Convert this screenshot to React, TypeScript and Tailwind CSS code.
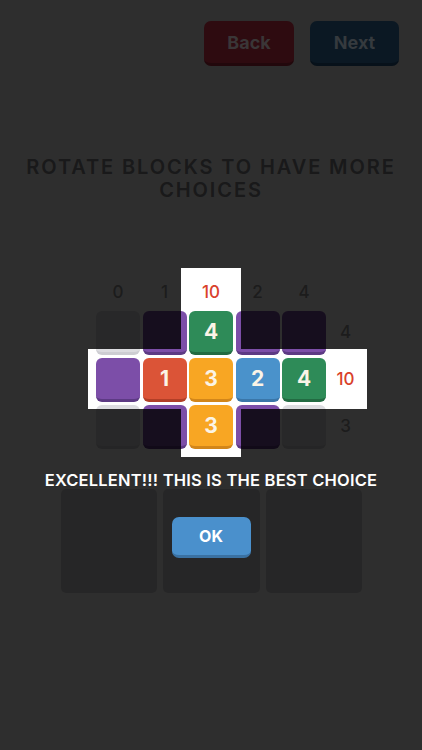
import type { ReactNode } from 'react';

type Tone = 'empty' | 'purple' | 'red' | 'orange' | 'blue' | 'green';

const toneClass: Record<Tone, string> = {
  empty: 'bg-[#dcdce0] border-[#cdcdd2]',
  purple: 'bg-[#7c4ea8] border-[#5d3a84]',
  red: 'bg-[#db5437] border-[#b23f27]',
  orange: 'bg-[#f8a623] border-[#d2861a]',
  blue: 'bg-[#4a92cb] border-[#3a76a8]',
  green: 'bg-[#2e8b58] border-[#226b42]',
};

// board rows: [tone, number]
const board: [Tone, number | null][][] = [
  [['empty', null], ['purple', null], ['green', 4], ['purple', null], ['purple', null]],
  [['purple', null], ['red', 1], ['orange', 3], ['blue', 2], ['green', 4]],
  [['empty', null], ['purple', null], ['orange', 3], ['purple', null], ['empty', null]],
];

const colLabels = ['0', '1', '10', '2', '4'];
const rowLabels = ['4', '10', '3'];

function Block({ tone, value }: { tone: Tone; value: number | null }) {
  return (
    <div
      className={`w-[44px] h-[44px] rounded-[6px] border-b-[3px] flex items-center justify-center text-[21px] font-bold text-[#fbf4e6] ${toneClass[tone]}`}
    >
      {value}
    </div>
  );
}

function Label({ children, hot }: { children: ReactNode; hot?: boolean }) {
  return (
    <div
      className={`flex items-center justify-center text-[17px] font-medium ${hot ? 'text-[#d9412b]' : 'text-[#9a9a9c]'}`}
    >
      {children}
    </div>
  );
}

export default function App() {
  return (
    <div className="relative w-full h-[750px] overflow-hidden bg-white font-['Inter','Noto_Sans',sans-serif]">
      <div className="relative z-20 flex justify-end gap-4 pt-[21px] pr-[23px]">
        <button className="w-[90px] h-[45px] rounded-[7px] bg-[#2e0b10] border-b-[3px] border-[#22080c] text-[18px] font-bold text-[#3a3637]">
          Back
        </button>
        <button className="w-[89px] h-[45px] rounded-[7px] bg-[#0b1823] border-b-[3px] border-[#07111a] text-[18px] font-bold text-[#353a3e]">
          Next
        </button>
      </div>

      <h1 className="mt-[90px] px-4 text-center text-[20px] leading-[23px] font-semibold tracking-[1.9px] text-[#8b8b8e]">
        <span className="block">ROTATE BLOCKS TO HAVE MORE</span>
        <span className="block">CHOICES</span>
      </h1>

      {/* board */}
      <div className="mt-[76px] ml-[96px] grid grid-cols-[44px_44px_44px_44px_44px_34px] grid-rows-[30px_44px_44px_44px] gap-x-[2.5px] gap-y-[3px]">
        {colLabels.map((l) => (
          <Label key={`c${l}`} hot={l === '10'}>
            {l}
          </Label>
        ))}
        <div />
        {board.map((row, r) => (
          <>
            {row.map(([tone, value], c) => (
              <Block key={`${r}-${c}`} tone={tone} value={value} />
            ))}
            <Label key={`r${r}`} hot={r === 1}>
              {rowLabels[r]}
            </Label>
          </>
        ))}
      </div>

      {/* choice slots */}
      <div className="mt-[40px] flex justify-center gap-[6px] pl-[1px]">
        <div className="w-[96px] h-[104px] rounded-[5px] bg-[#d4d4d6]" />
        <div className="w-[97px] h-[104px] rounded-[5px] bg-[#d4d4d6]" />
        <div className="w-[96px] h-[104px] rounded-[5px] bg-[#d4d4d6]" />
      </div>

      {/* dim overlay with the highlighted cross cut out */}
      <div className="absolute inset-0 z-10 bg-black/[0.82] [clip-path:polygon(evenodd,0_0,422px_0,422px_750px,0_750px,0_0,181px_268px,241px_268px,241px_349px,367px_349px,367px_409px,241px_409px,241px_457px,181px_457px,181px_409px,88px_409px,88px_349px,181px_349px,181px_268px)]" />

      {/* hint popup */}
      <div className="absolute z-20 inset-x-0 top-[470px] flex flex-col items-center">
        <p className="text-[16.5px] leading-[20px] font-semibold tracking-[0.2px] text-white">
          EXCELLENT!!! THIS IS THE BEST CHOICE
        </p>
        <button className="mt-[27px] w-[79px] h-[41px] rounded-[7px] bg-[#4a90cc] border-b-[3px] border-[#3a71a2] text-[16px] font-bold text-white">
          OK
        </button>
      </div>
    </div>
  );
}
